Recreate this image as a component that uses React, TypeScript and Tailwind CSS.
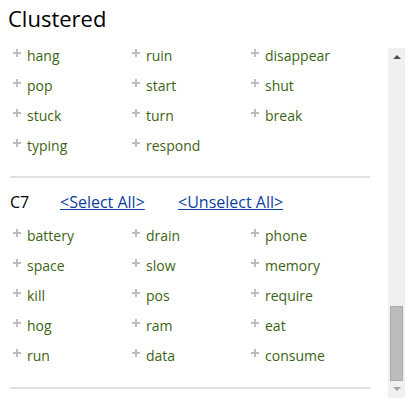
import React from "react";

const Plus = () => (
  <svg width="8" height="8" viewBox="0 0 8 8" className="mt-[7px] mr-[6px] shrink-0">
    <rect x="3" y="0" width="2" height="8" fill="#bdbdbd" />
    <rect x="0" y="3" width="8" height="2" fill="#bdbdbd" />
  </svg>
);

const Word = ({ w }: { w: string }) => (
  <div className="flex items-start h-[30px]">
    <Plus />
    <span className="text-[14px] leading-[28px] font-medium text-[#3b6413]">{w}</span>
  </div>
);

const Grid = ({ words }: { words: string[] }) => (
  <div className="grid grid-cols-[119px_119px_119px]">
    {words.map((w, i) => (
      <Word key={i} w={w} />
    ))}
  </div>
);

export default function App() {
  const s1 = ["hang", "ruin", "disappear", "pop", "start", "shut", "stuck", "turn", "break", "typing", "respond"];
  const s2 = [
    "battery", "drain", "phone",
    "space", "slow", "memory",
    "kill", "pos", "require",
    "hog", "ram", "eat",
    "run", "data", "consume",
  ];
  return (
    <div className="w-[420px] h-[411px] bg-white overflow-hidden font-['Open_Sans',sans-serif]">
      <div className="h-[42px] pl-[8px] pt-[3px] text-[22px] leading-[30px] font-medium text-black">Clustered</div>
      <div className="flex">
        <div className="w-[388px] pl-[13px]">
          <Grid words={s1} />
          <div className="mt-[14px] ml-[-3px] w-[360px] h-[2px] bg-[#e0e0e0]" />
          <div className="mt-[9px] ml-[-3px] h-[30px] flex text-[16px] leading-[30px] font-medium">
            <span className="w-[50px] text-black">C7</span>
            <a className="w-[118px] text-[#0b3fa0] underline">&lt;Select All&gt;</a>
            <a className="text-[#0b3fa0] underline">&lt;Unselect All&gt;</a>
          </div>
          <div className="mt-[5px]">
            <Grid words={s2} />
          </div>
          <div className="mt-[15px] ml-[-3px] w-[360px] h-[2px] bg-[#e0e0e0]" />
        </div>
        <div className="mt-[6px] w-[17px] h-[350px] bg-[#f0f0f0] relative">
          <div className="absolute left-[5px] top-[7px] w-0 h-0 border-l-[4px] border-r-[4px] border-b-[4px] border-l-transparent border-r-transparent border-b-[#505050]" />
          <div className="absolute left-[2px] top-[258px] w-[13px] h-[75px] bg-[#bcbcbc] border border-[#aaaaaa]" />
          <div className="absolute left-[5px] bottom-[7px] w-0 h-0 border-l-[4px] border-r-[4px] border-t-[4px] border-l-transparent border-r-transparent border-t-[#a3a3a3]" />
        </div>
      </div>
    </div>
  );
}
